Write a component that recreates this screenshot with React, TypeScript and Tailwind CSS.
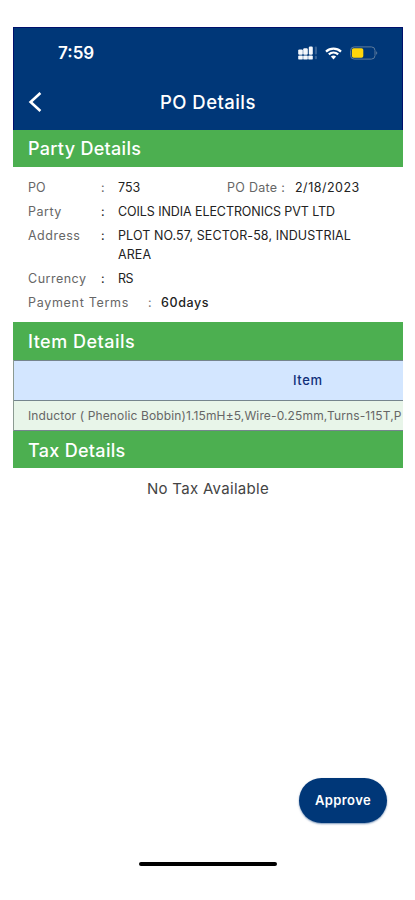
import React from "react";

interface Detail {
  label: string;
  value: string;
  valueClass: string;
}

const DETAILS: Detail[] = [
  { label: "Party", value: "COILS INDIA ELECTRONICS PVT LTD", valueClass: "tracking-[-0.08px]" },
  { label: "Address", value: "PLOT NO.57, SECTOR-58, INDUSTRIAL AREA", valueClass: "tracking-[0.1px]" },
  { label: "Currency", value: "RS", valueClass: "tracking-[-0.5px]" },
];

function SignalIcon() {
  return (
    <svg className="h-[14px] w-[20px]" viewBox="0 0 20 14" fill="#f4f7fc">
      {[0.2, 5.2, 10.2].map((x) => (
        <rect key={x} x={x} y={9.4} width={4.6} height={4.2} rx={1.2} />
      ))}
      <rect x={0.2} y={3.4} width={4.6} height={5.4} rx={1.2} />
      <rect x={5.2} y={2.2} width={4.6} height={6.6} rx={1.2} />
      <rect x={10.8} y={0.6} width={4} height={8.2} rx={1.2} />
      <g opacity={0.22}>
        <rect x={16.8} y={0.4} width={2.2} height={8} rx={1} />
        <rect x={16.8} y={9.8} width={2.2} height={3.4} rx={1} />
      </g>
    </svg>
  );
}

function WifiIcon() {
  return (
    <svg className="h-[13px] w-[17px]" viewBox="0 0 17 13" fill="none" stroke="#fff" strokeWidth={2.2}>
      <path d="M1 4.6C5.2 0.6 11.8 0.6 16 4.6" />
      <path d="M3.8 7.4C6.5 4.9 10.5 4.9 13.2 7.4" />
      <path d="M5.9 9.6C7.4 8.2 9.6 8.2 11.1 9.6L8.5 12.4Z" fill="#fff" stroke="none" />
    </svg>
  );
}

function BatteryIcon() {
  return (
    <svg className="h-[14px] w-[28px]" viewBox="0 0 28 14">
      <rect x={0.6} y={0.9} width={24.4} height={12.2} rx={3.6} fill="none" stroke="#5d7b9c" />
      <rect x={1.9} y={2.2} width={11.4} height={9.6} rx={1.8} fill="#ffd60a" />
      <path d="M26.2 5.2C27.6 5.8 27.6 8.2 26.2 8.8Z" fill="#5d7b9c" />
    </svg>
  );
}

function SectionTitle({ children, className }: { children: React.ReactNode; className: string }) {
  return (
    <h2 className={`flex shrink-0 items-center bg-[#4caf50] pl-[15px] text-[18px] font-medium text-white ${className}`}>
      {children}
    </h2>
  );
}

export default function App() {
  return (
    <div className="flex h-[900px] w-[415px] flex-col overflow-hidden bg-white pt-[27px] pr-[12px] pl-[13px] font-['Inter',sans-serif]">
      <header className="h-[103px] shrink-0 border border-b-0 border-[#00106c] bg-[#003778] text-white">
        <div className="flex h-[50px] items-center pr-[24px] pl-[44px]">
          <span className="pt-[1px] text-[17px] font-semibold">7:59</span>
          <div className="ml-auto flex items-center">
            <SignalIcon />
            <span className="mr-[8px] ml-[7px]">
              <WifiIcon />
            </span>
            <BatteryIcon />
          </div>
        </div>
        <div className="flex h-[48px] items-center">
          <svg className="ml-[14px] h-[20px] w-[14px]" viewBox="0 0 14 20" fill="none" stroke="#fff" strokeWidth={2.6}>
            <path d="M12.4 1L2.6 10L12.4 19" />
          </svg>
          <h1 className="ml-[118px] pt-[2px] text-[18.5px] font-medium tracking-[0.45px]">PO Details</h1>
        </div>
      </header>

      <SectionTitle className="h-[37px] tracking-[0.3px]">Party Details</SectionTitle>
      <div className="flex h-[155px] shrink-0 flex-col gap-[5px] pt-[11px] pl-[15px] text-[12.5px] leading-[19px] text-[#222]">
        <div className="flex">
          <span className="w-[73px] text-[#666]">PO</span>
          <span className="w-[17px] text-[#666]">:</span>
          <span className="w-[109px]">753</span>
          <span className="w-[68px] tracking-[0.3px] text-[#666]">PO Date :</span>
          <span className="tracking-[0.5px]">2/18/2023</span>
        </div>
        {DETAILS.map((d) => (
          <div key={d.label} className="flex">
            <span className="w-[73px] tracking-[0.5px] text-[#666]">{d.label}</span>
            <span className="w-[17px]">:</span>
            <span className={`w-[245px] ${d.valueClass}`}>{d.value}</span>
          </div>
        ))}
        <div className="flex">
          <span className="w-[120px] tracking-[0.7px] text-[#666]">Payment Terms</span>
          <span className="w-[13px] text-[#777]">:</span>
          <span className="font-medium tracking-[0.6px]">60days</span>
        </div>
      </div>

      <SectionTitle className="h-[38px] pt-[1px] tracking-[0.5px]">Item Details</SectionTitle>
      <div className="h-[71px] shrink-0 overflow-hidden border-l border-[#8b9a91]">
        <div className="flex h-[41px] items-center border-y border-[#75858d] bg-[#d3e6ff] pt-[1px] pl-[279px] text-[13px] font-medium tracking-[0.6px] text-[#102f78]">
          Item
        </div>
        <div className="flex h-[30px] items-center border-b border-[#75858d] bg-[#e8f5e9] pl-[14px] text-[12px] tracking-[0.13px] whitespace-nowrap text-[#666]">
          Inductor ( Phenolic Bobbin)1.15mH±5,Wire-0.25mm,Turns-115T,P
        </div>
      </div>
      <SectionTitle className="h-[37px] pt-[1px] tracking-[0.3px]">Tax Details</SectionTitle>
      <p className="pt-[11px] text-center text-[15px] leading-[20px] tracking-[0.3px] text-[#444]">No Tax Available</p>

      <div className="mt-auto flex justify-end pr-[16px] pb-[39px]">
        <button className="h-[45px] w-[88px] rounded-full bg-[#003778] text-[13px] font-semibold tracking-[0.4px] text-white shadow-[0_1px_2px_#00377888]">
          Approve
        </button>
      </div>
      <div className="mb-[34px] ml-[126px] h-[4px] w-[138px] shrink-0 rounded-full bg-black" />
    </div>
  );
}
